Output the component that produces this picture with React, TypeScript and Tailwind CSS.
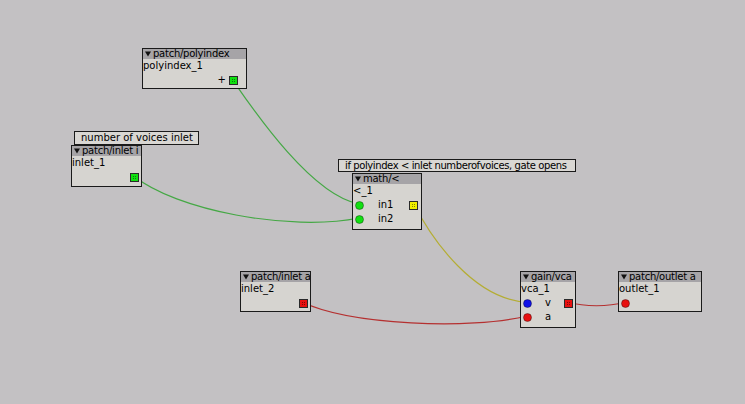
import React from 'react';

const Tri = () => (
  <svg width="6" height="6" viewBox="0 0 6 6" className="block shrink-0">
    <path d="M0 0.5 L6 0.5 L3 5.5 Z" fill="#111" />
  </svg>
);

const Outlet = ({ color }: { color: string }) => (
  <svg width="9" height="9" viewBox="0 0 9 9" className="block shrink-0">
    <rect x="0.5" y="0.5" width="8" height="8" fill={color} stroke="#2a2a2a" />
    <rect x="3" y="3" width="1" height="1" fill="#000" opacity="0.45" />
    <rect x="5" y="3" width="1" height="1" fill="#000" opacity="0.45" />
    <rect x="3" y="5" width="1" height="1" fill="#000" opacity="0.45" />
    <rect x="5" y="5" width="1" height="1" fill="#000" opacity="0.45" />
  </svg>
);

const Inlet = ({ color }: { color: string }) => (
  <svg width="9" height="9" viewBox="0 0 9 9" className="block shrink-0">
    <circle cx="4.5" cy="4.5" r="4" fill={color} stroke="#000" strokeOpacity="0.35" />
  </svg>
);

interface NodeProps {
  pos: string;
  title: string;
  name: string;
  children?: React.ReactNode;
}

const Node: React.FC<NodeProps> = ({ pos, title, name, children }) => (
  <div className={`absolute ${pos} border border-[#1a1a1a] bg-[#d6d4d0] overflow-hidden flex flex-col text-black`}>
    <div className="h-[10px] shrink-0 bg-[#a6a4a7] flex items-center gap-[2px] pl-[2px] text-[10px] leading-none whitespace-nowrap tracking-[-0.25px]">
      <Tri />
      <span>{title}</span>
    </div>
    <div className="h-[14px] shrink-0 flex items-center text-[10px] leading-none whitespace-nowrap">{name}</div>
    {children}
  </div>
);

const Comment = ({ pos, text, tight }: { pos: string; text: string; tight?: boolean }) => (
  <div
    className={`absolute ${pos} border border-[#1a1a1a] bg-[#d9d7d3] flex items-center pl-[6px] text-[10px] leading-none whitespace-nowrap text-black ${
      tight ? 'tracking-[-0.4px]' : ''
    }`}
  >
    {text}
  </div>
);

export default function App() {
  return (
    <div className="relative w-[745px] h-[404px] bg-[#c3c1c3] overflow-hidden font-['DejaVu_Sans',sans-serif]">
      {/* wires */}
      <svg className="absolute inset-0" width="745" height="404" fill="none" strokeWidth="1.2">
        <path d="M232 79 C250 105, 310 195, 359 204" stroke="#45a845" />
        <path d="M134 176 C175 210, 290 232, 359 218" stroke="#45a845" />
        <path d="M414 204 C432 240, 475 300, 527 302" stroke="#b4ad34" />
        <path d="M302 302 C350 325, 470 330, 527 316" stroke="#b53030" />
        <path d="M568 302 C585 307, 608 307, 625 302" stroke="#b53030" />
      </svg>

      <Comment pos="left-[74px] top-[131px] w-[125px] h-[14px]" text="number of voices inlet" />
      <Comment
        pos="left-[338px] top-[159px] w-[238px] h-[13px]"
        text="if polyindex < inlet numberofvoices, gate opens"
        tight
      />

      <Node pos="left-[142px] top-[48px] w-[105px] h-[41px]" title="patch/polyindex" name="polyindex_1">
        <div className="h-[14px] flex items-center justify-end pr-[8px] gap-[3px] text-[10px] leading-none">
          <span>+</span>
          <Outlet color="#10e010" />
        </div>
      </Node>

      <Node pos="left-[71px] top-[145px] w-[71px] h-[42px]" title="patch/inlet i" name="inlet_1">
        <div className="h-[14px] flex items-center justify-end pr-[2px]">
          <Outlet color="#10e010" />
        </div>
      </Node>

      <Node pos="left-[352px] top-[173px] w-[70px] h-[57px]" title="math/<" name="<_1">
        <div className="h-[14px] flex items-center pl-[2px] pr-[3px] text-[10px] leading-none">
          <Inlet color="#12e012" />
          <span className="ml-[14px]">in1</span>
          <span className="ml-auto">
            <Outlet color="#f0f000" />
          </span>
        </div>
        <div className="h-[14px] flex items-center pl-[2px] pr-[3px] text-[10px] leading-none">
          <Inlet color="#12e012" />
          <span className="ml-[14px]">in2</span>
        </div>
      </Node>

      <Node pos="left-[240px] top-[271px] w-[71px] h-[41px]" title="patch/inlet a" name="inlet_2">
        <div className="h-[14px] flex items-center justify-end pr-[2px]">
          <Outlet color="#e81010" />
        </div>
      </Node>

      <Node pos="left-[520px] top-[271px] w-[56px] h-[57px]" title="gain/vca" name="vca_1">
        <div className="h-[14px] flex items-center pl-[2px] pr-[2px] text-[10px] leading-none">
          <Inlet color="#1010e8" />
          <span className="ml-[13px]">v</span>
          <span className="ml-auto">
            <Outlet color="#e81010" />
          </span>
        </div>
        <div className="h-[14px] flex items-center pl-[2px] pr-[2px] text-[10px] leading-none">
          <Inlet color="#e81010" />
          <span className="ml-[13px]">a</span>
        </div>
      </Node>

      <Node pos="left-[618px] top-[271px] w-[84px] h-[41px]" title="patch/outlet a" name="outlet_1">
        <div className="h-[14px] flex items-center pl-[2px]">
          <Inlet color="#e81010" />
        </div>
      </Node>
    </div>
  );
}
